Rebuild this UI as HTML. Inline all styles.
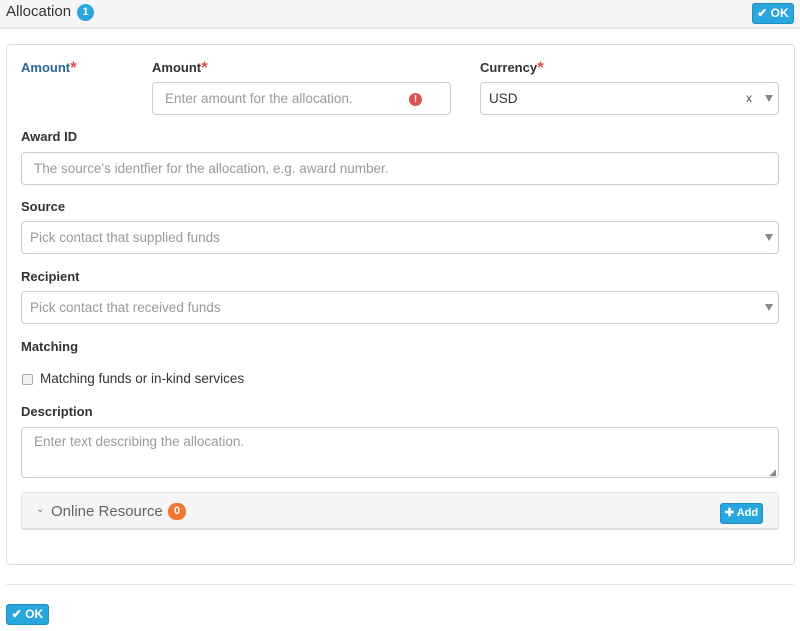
<!DOCTYPE html>
<html><head><style>
*{box-sizing:border-box;margin:0;padding:0}
body{width:800px;height:631px;background:#fff;font-family:"Liberation Sans",Arial,sans-serif;font-size:13.5px;color:#333;position:relative;overflow:hidden}
.a{position:absolute}
.lbl{position:absolute;font-weight:bold;font-size:13px;color:#333;line-height:16px}
.req{color:#d9534f;font-size:17px;position:relative;top:1px;line-height:10px}
.in{position:absolute;border:1px solid #ccc;border-radius:4px;background:#fff;height:33px;font-size:13.5px;color:#999;padding-left:12px;line-height:31px}
.btn{position:absolute;background:#29a6dd;border:1px solid #1d8fc2;border-radius:3px;color:#fff;font-weight:bold;font-size:12px;text-align:center;line-height:19px}
.arr{position:absolute;right:5px;top:12px;width:0;height:0;border-left:4px solid transparent;border-right:4px solid transparent;border-top:7px solid #888}
</style></head><body>
<div class="a" style="left:0;top:0;width:800px;height:29px;background:#f5f5f5;border-bottom:2px solid #e6e6e6"></div>
<div class="a" style="left:6px;top:3px;font-size:15px;color:#333">Allocation</div>
<div class="a" style="left:77px;top:4px;width:17px;height:17px;border-radius:9px;background:#29a6dd;color:#fff;font-size:11px;font-weight:bold;text-align:center;line-height:17px">1</div>
<div class="btn" style="left:752px;top:3px;width:42px;height:21px">&#10004; OK</div>

<div class="a" style="left:6px;top:44px;width:789px;height:521px;border:1px solid #ddd;border-radius:4px"></div>

<div class="lbl" style="left:21px;top:60px;color:#2a6496">Amount<span class="req">*</span></div>
<div class="lbl" style="left:152px;top:60px">Amount<span class="req">*</span></div>
<div class="in" style="left:152px;top:82px;width:299px">Enter amount for the allocation.
<div class="a" style="left:256px;top:10px;width:13px;height:13px;border-radius:7px;background:#d9534f;color:#fff;font-size:10px;font-weight:bold;text-align:center;line-height:13px">!</div></div>
<div class="lbl" style="left:480px;top:60px">Currency<span class="req">*</span></div>
<div class="in" style="left:480px;top:82px;width:299px;color:#333;padding-left:8px">USD<span class="a" style="left:265px;top:0;font-size:12px;color:#555">x</span><div class="arr"></div></div>

<div class="lbl" style="left:21px;top:129px">Award ID</div>
<div class="in" style="left:21px;top:152px;width:758px">The source's identfier for the allocation, e.g. award number.</div>
<div class="lbl" style="left:21px;top:199px">Source</div>
<div class="in" style="left:21px;top:221px;width:758px;padding-left:8px">Pick contact that supplied funds<div class="arr"></div></div>
<div class="lbl" style="left:21px;top:269px">Recipient</div>
<div class="in" style="left:21px;top:291px;width:758px;padding-left:8px">Pick contact that received funds<div class="arr"></div></div>
<div class="lbl" style="left:21px;top:339px">Matching</div>
<div class="a" style="left:22px;top:374px;width:11px;height:11px;border:1px solid #aaa;border-radius:2px;background:#f3f3f3"></div>
<div class="a" style="left:40px;top:371px;font-size:13.5px;color:#333">Matching funds or in-kind services</div>
<div class="lbl" style="left:21px;top:404px">Description</div>
<div class="in" style="left:21px;top:427px;width:758px;height:51px;line-height:28px">Enter text describing the allocation.
<span class="a" style="right:2px;bottom:0;font-size:9px;color:#888;line-height:10px">◢</span></div>

<div class="a" style="left:21px;top:492px;width:758px;height:38px;background:#f5f5f5;border:1px solid #e3e3e3;border-bottom:2px solid #ddd;border-radius:3px"></div>
<div class="a" style="left:36px;top:504px;font-size:10px;color:#777">&#8964;</div>
<div class="a" style="left:51px;top:503px;font-size:15px;color:#666">Online Resource</div>
<div class="a" style="left:168px;top:503px;width:18px;height:17px;border-radius:8px;background:#f0782e;color:#fff;font-size:11px;font-weight:bold;text-align:center;line-height:17px">0</div>
<div class="btn" style="left:720px;top:503px;width:43px;height:21px;font-size:11px">&#10010; Add</div>

<div class="a" style="left:6px;top:584px;width:788px;height:1px;background:#e8e8e8"></div>
<div class="btn" style="left:6px;top:604px;width:43px;height:21px">&#10004; OK</div>
</body></html>
